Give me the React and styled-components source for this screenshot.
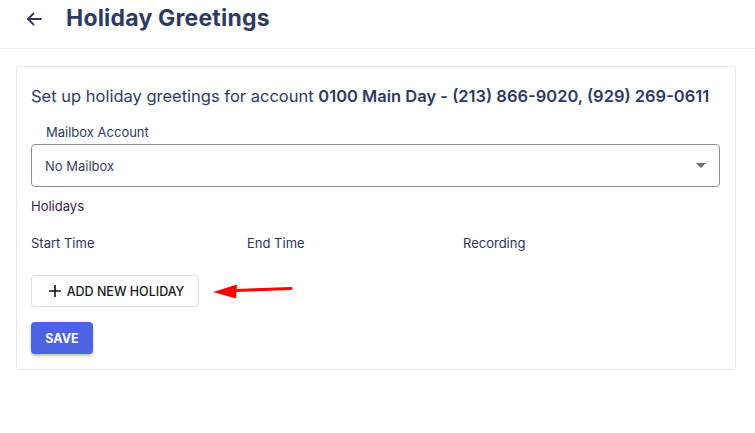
import React from 'react';
import styled, { createGlobalStyle } from 'styled-components';

const GlobalStyle = createGlobalStyle`
  body {
    margin: 0;
    background: #ffffff;
    font-family: Inter, "Noto Sans", sans-serif;
    color: #2c3356;
  }
`;

const Page = styled.div`
  width: 755px;
  height: 433px;
  overflow: hidden;
`;

const Header = styled.header`
  display: flex;
  align-items: center;
  height: 49px;
  padding: 0 0 0 24px;
  gap: 22px;
  border-bottom: 1px solid #ebecef;
  box-sizing: border-box;
`;

const BackButton = styled.button`
  display: flex;
  align-items: center;
  justify-content: center;
  width: 20px;
  height: 20px;
  padding: 0;
  border: none;
  background: none;
  color: #2f3a63;
  margin-top: -11px;
`;

const Title = styled.h1`
  margin: -12px 0 0 0;
  font-size: 23px;
  font-weight: 700;
  color: #2f3a63;
  letter-spacing: 0.2px;
`;

const Card = styled.section`
  margin: 17px 19px 0 16px;
  padding: 18px 15px 14px 14px;
  border: 1px solid #e2e3e7;
  border-radius: 4px;
  height: 304px;
  box-sizing: border-box;
`;

const Intro = styled.p`
  margin: 0;
  font-size: 16.5px;
  color: #2f3a63;
  line-height: 22px;

  strong {
    font-weight: 600;
  }
`;

const FieldLabel = styled.div`
  margin: 17px 0 0 15px;
  font-size: 13px;
  line-height: 16px;
  color: #2f3a63;
`;

const Select = styled.div`
  display: flex;
  align-items: center;
  justify-content: space-between;
  margin-top: 4px;
  height: 43px;
  padding: 0 13px 0 13px;
  border: 1px solid #8e8e8e;
  border-radius: 4px;
  box-sizing: border-box;
  font-size: 13px;
  color: #3c3f55;
`;

const Caret = styled.span`
  width: 0;
  height: 0;
  border-left: 5px solid transparent;
  border-right: 5px solid transparent;
  border-top: 5px solid #6f6f6f;
`;

const SectionLabel = styled.div`
  margin-top: 11px;
  font-size: 13px;
  line-height: 16px;
  color: #3a2150;
`;

const Columns = styled.div`
  display: grid;
  grid-template-columns: 216px 216px 1fr;
  margin-top: 21px;
  font-size: 13px;
  line-height: 16px;
  color: #2f3356;
`;

const ActionRow = styled.div`
  display: flex;
  align-items: center;
  margin-top: 24px;
  gap: 14px;
`;

const OutlineButton = styled.button`
  display: flex;
  align-items: center;
  justify-content: center;
  gap: 5px;
  width: 168px;
  height: 32px;
  padding: 0 0 0 2px;
  border: 1px solid #dcdde1;
  border-radius: 4px;
  background: #ffffff;
  font-family: Inter, sans-serif;
  font-size: 12.5px;
  font-weight: 500;
  color: #17181c;
  box-sizing: border-box;
`;

const SaveButton = styled.button`
  margin-top: 15px;
  width: 62px;
  height: 32px;
  border: none;
  border-radius: 4px;
  background: #4b63e0;
  color: #ffffff;
  font-family: Inter, sans-serif;
  font-size: 12.5px;
  font-weight: 700;
  box-shadow: 0 2px 3px rgba(0, 0, 0, 0.25);
`;

export default function App() {
  return (
    <Page>
      <GlobalStyle />
      <Header>
        <BackButton aria-label="Back">
          <svg width="18" height="18" viewBox="0 0 18 18" fill="none" stroke="currentColor" strokeWidth="1.8" strokeLinecap="round">
            <path d="M16 9H3" />
            <path d="M8.5 3.5L3 9l5.5 5.5" />
          </svg>
        </BackButton>
        <Title>Holiday Greetings</Title>
      </Header>
      <Card>
        <Intro>
          Set up holiday greetings for account <strong>0100 Main Day - (213) 866-9020, (929) 269-0611</strong>
        </Intro>
        <FieldLabel>Mailbox Account</FieldLabel>
        <Select>
          <span>No Mailbox</span>
          <Caret />
        </Select>
        <SectionLabel>Holidays</SectionLabel>
        <Columns>
          <span>Start Time</span>
          <span>End Time</span>
          <span>Recording</span>
        </Columns>
        <ActionRow>
          <OutlineButton>
            <svg width="14" height="14" viewBox="0 0 14 14" stroke="#111" strokeWidth="1.6">
              <path d="M7 1v12M1 7h12" />
            </svg>
            ADD NEW HOLIDAY
          </OutlineButton>
          <svg width="80" height="18" viewBox="0 0 80 18">
            <path d="M22 8.5L78 6.5" stroke="#f00" strokeWidth="3" strokeLinecap="round" />
            <path d="M0 10L24 2.5L23 16.5Z" fill="#f00" />
          </svg>
        </ActionRow>
        <SaveButton>SAVE</SaveButton>
      </Card>
    </Page>
  );
}
